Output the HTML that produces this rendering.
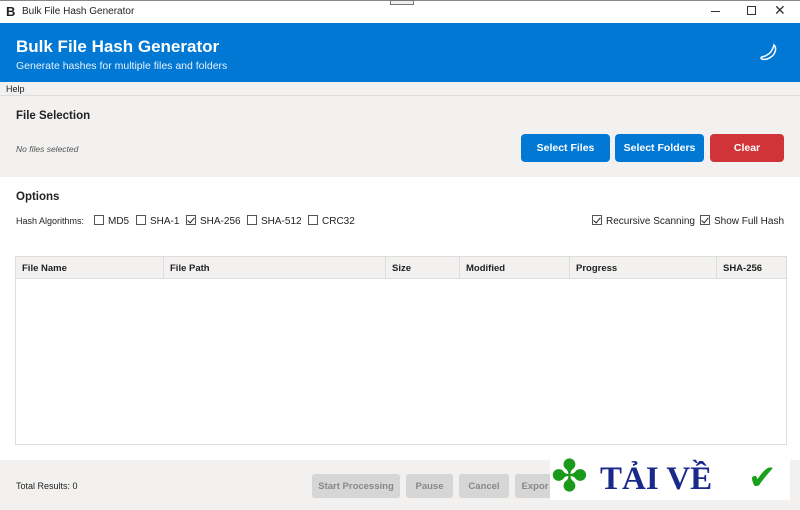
<!DOCTYPE html>
<html><head><meta charset="utf-8"><style>
*{margin:0;padding:0;box-sizing:border-box}
body{width:800px;height:510px;overflow:hidden;background:#fff;font-family:"Liberation Sans",sans-serif;position:relative;color:#222}
.abs{position:absolute}
.btn{position:absolute;border-radius:4px;color:#fff;font-size:10.5px;font-weight:bold;text-align:center;height:28px;line-height:29px}
.cb{display:inline-block;width:10px;height:10px;border:1px solid #555;vertical-align:-1px;margin-right:4px;position:relative;background:#fff}
.cb.on::after{content:"";position:absolute;left:2px;top:0px;width:3px;height:6px;border:solid #222;border-width:0 1.5px 1.5px 0;transform:rotate(40deg)}
.th{position:absolute;top:0;height:22px;line-height:23px;font-size:9.5px;font-weight:bold;padding-left:6px;border-right:1px solid #ddd}
.gb{position:absolute;top:474px;height:24px;line-height:25px;background:#d6d6d6;color:#888;font-size:9.5px;font-weight:bold;text-align:center;border-radius:3px}
.alg{position:absolute;top:215px;font-size:10px}
</style></head><body>
<div class="abs" style="left:0;top:0;width:800px;height:23px;background:#fff;border-top:1px solid #888"></div>
<div class="abs" style="left:6px;top:4px;font-size:13px;font-weight:bold;color:#222">B</div>
<div class="abs" style="left:22px;top:6px;font-size:10px">Bulk File Hash Generator</div>
<div class="abs" style="left:390px;top:0;width:24px;height:5px;border:1px solid #777;background:#eee"></div>
<div class="abs" style="left:711px;top:11px;width:9px;height:1px;background:#333"></div>
<div class="abs" style="left:747px;top:6px;width:9px;height:9px;border:1px solid #333"></div>
<div class="abs" style="left:774px;top:2px;font-size:14px;color:#333">✕</div>
<div class="abs" style="left:0;top:23px;width:800px;height:59px;background:#0078d4"></div>
<div class="abs" style="left:16px;top:37px;font-size:17px;font-weight:bold;color:#fff">Bulk File Hash Generator</div>
<div class="abs" style="left:16px;top:60px;font-size:10.5px;color:#e8f1fb">Generate hashes for multiple files and folders</div>
<svg class="abs" style="left:758px;top:43px" width="22" height="20" viewBox="0 0 22 20"><path d="M16 2c3 3 2 11-7 14-3 1-6 0-6-1 0-2 4-1 6-3 4-2 6-6 7-10z" fill="none" stroke="#fff" stroke-width="1.5"/></svg>
<div class="abs" style="left:0;top:82px;width:800px;height:14px;background:#f2f1f0;border-bottom:1px solid #ddd"></div>
<div class="abs" style="left:6px;top:84px;font-size:9px">Help</div>
<div class="abs" style="left:0;top:96px;width:800px;height:81px;background:#f2f1f0"></div>
<div class="abs" style="left:16px;top:110px;font-size:11.5px;font-weight:bold">File Selection</div>
<div class="abs" style="left:16px;top:144px;font-size:8.5px;font-style:italic;color:#555">No files selected</div>
<div class="btn" style="left:521px;top:134px;width:89px;background:#0078d4">Select Files</div>
<div class="btn" style="left:615px;top:134px;width:89px;background:#0078d4">Select Folders</div>
<div class="btn" style="left:710px;top:134px;width:74px;background:#d13438">Clear</div>
<div class="abs" style="left:16px;top:191px;font-size:11.5px;font-weight:bold">Options</div>
<div class="abs" style="left:16px;top:216px;font-size:9px">Hash Algorithms:</div>
<div class="alg" style="left:94px"><span class="cb"></span>MD5</div>
<div class="alg" style="left:136px"><span class="cb"></span>SHA-1</div>
<div class="alg" style="left:186px"><span class="cb on"></span>SHA-256</div>
<div class="alg" style="left:247px"><span class="cb"></span>SHA-512</div>
<div class="alg" style="left:308px"><span class="cb"></span>CRC32</div>
<div class="alg" style="left:592px"><span class="cb on"></span>Recursive Scanning</div>
<div class="alg" style="left:700px"><span class="cb on"></span>Show Full Hash</div>
<div class="abs" style="left:15px;top:256px;width:772px;height:189px;border:1px solid #ddd;background:#fff">
<div class="abs" style="left:0;top:0;width:770px;height:22px;background:#f2f1f0;border-bottom:1px solid #ddd"></div>
<div class="th" style="left:0;width:148px">File Name</div>
<div class="th" style="left:148px;width:222px">File Path</div>
<div class="th" style="left:370px;width:74px">Size</div>
<div class="th" style="left:444px;width:110px">Modified</div>
<div class="th" style="left:554px;width:147px">Progress</div>
<div class="th" style="left:701px;width:69px;border:0">SHA-256</div>
</div>
<div class="abs" style="left:0;top:460px;width:800px;height:50px;background:#f2f1f0"></div>
<div class="abs" style="left:16px;top:481px;font-size:9px">Total Results: 0</div>
<div class="gb" style="left:312px;width:88px">Start Processing</div>
<div class="gb" style="left:406px;width:47px">Pause</div>
<div class="gb" style="left:459px;width:50px">Cancel</div>
<div class="gb" style="left:515px;width:40px">Expor</div>
<div class="abs" style="left:550px;top:458px;width:240px;height:42px;background:#fff"></div>
<div class="abs" style="left:551px;top:452px;font-size:44px;color:#1a9a1a;line-height:50px">✤</div>
<div class="abs" style="left:600px;top:459px;font-family:'Liberation Serif',serif;font-size:33px;font-weight:bold;color:#1a2a8a;line-height:40px">TẢI VỀ</div>
<div class="abs" style="left:748px;top:458px;font-size:34px;color:#1aa01a;line-height:40px">✔</div>
</body></html>
